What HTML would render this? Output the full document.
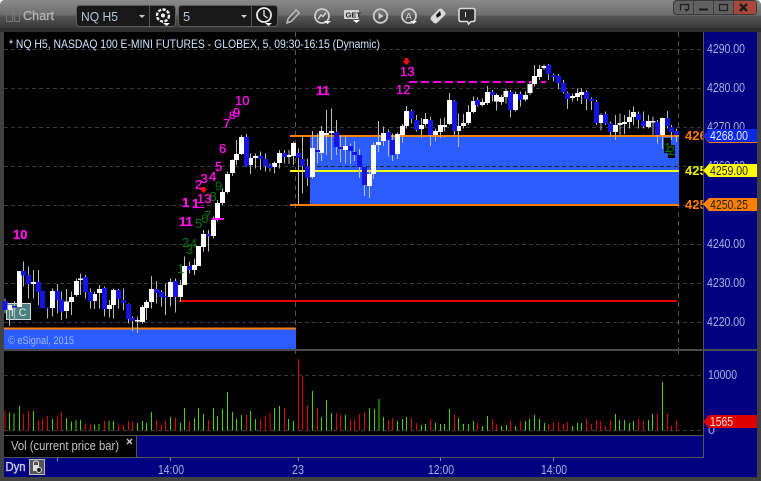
<!DOCTYPE html>
<html><head><meta charset="utf-8"><style>
html,body{margin:0;padding:0;background:#fff;width:761px;height:481px;overflow:hidden}
svg{display:block;font-family:"Liberation Sans",sans-serif}
</style></head><body>
<svg width="761" height="481" viewBox="0 0 761 481" xmlns="http://www.w3.org/2000/svg">
<defs>
<linearGradient id="tb" x1="0" y1="0" x2="0" y2="1">
<stop offset="0" stop-color="#8a8a8a"/><stop offset=".47" stop-color="#6c6c6c"/><stop offset=".5" stop-color="#565656"/><stop offset="1" stop-color="#2e2e2e"/>
</linearGradient>
<clipPath id="sv"><rect x="680" y="120" width="23" height="100"/></clipPath>
</defs>
<path d="M6 0H755Q761 0 761 6V481H0V6Q0 0 6 0Z" fill="#414141"/>
<rect x="0" y="0" width="761" height="32" fill="url(#tb)" rx="5"/>
<rect x="0" y="28" width="761" height="4" fill="#2e2e2e"/>
<rect x="4" y="32" width="753" height="445" fill="#000"/>
<rect x="703" y="32" width="54" height="445" fill="#000080"/>
<rect x="4" y="436" width="699" height="41" fill="#000080"/>
<rect x="703" y="32" width="1" height="426" fill="#555"/>

<!-- toolbar -->
<g fill="none" stroke="#777" stroke-width="1"><rect x="6.500" y="8.500" width="6" height="13"/><rect x="14.500" y="8.500" width="5" height="13"/></g>
<text x="23" y="20" font-size="12.500" fill="#b4b4b4" stroke="#b4b4b4" stroke-width=".3" textLength="31" lengthAdjust="spacingAndGlyphs">Chart</text>
<rect x="76.500" y="5.500" width="99" height="21" rx="3" fill="#181818" stroke="#5c5c5c"/>
<path d="M149.500 6V26" stroke="#555"/>
<rect x="178.500" y="5.500" width="99" height="21" rx="3" fill="#181818" stroke="#5c5c5c"/>
<path d="M251.500 6V26" stroke="#555"/>
<text x="81" y="21" font-size="13" fill="#b5c8d8" textLength="37" lengthAdjust="spacingAndGlyphs">NQ H5</text>
<text x="183" y="21" font-size="13" fill="#b5c8d8">5</text>
<path d="M139 15h6l-3 3zM241 15h6l-3 3z" fill="#ccc"/>
<circle cx="163" cy="15.500" r="6" fill="none" stroke="#eee" stroke-width="2.400" stroke-dasharray="3.2 1.4"/><circle cx="163" cy="15.500" r="2" fill="#eee"/>
<path d="M163 23h7l-3.500 3z" fill="#fff"/>
<circle cx="264" cy="15" r="7" fill="none" stroke="#e8e8e8" stroke-width="1.800"/><path d="M264 10v5.500l3.500 2.500" fill="none" stroke="#e8e8e8" stroke-width="1.300"/>
<path d="M265 23h7l-3.500 3z" fill="#fff"/>
<path d="M287 23l1.200-4.500 8-8.500 3 3-8 8.500z" fill="none" stroke="#bbb" stroke-width="1.500"/>
<circle cx="322" cy="16" r="7" fill="none" stroke="#ccc" stroke-width="1.800"/><path d="M318 19l3-4 2 1.500 3-4" fill="none" stroke="#ccc" stroke-width="1.500"/>
<path d="M324 21h7l-3.500 3z" fill="#fff"/>
<rect x="344" y="10" width="15" height="9" rx="1" fill="#d6d6d6"/><text x="345.500" y="17.500" font-size="7.500" font-weight="bold" fill="#222">GET</text>
<path d="M353 20h7l-3.500 3z" fill="#fff"/>
<circle cx="380.500" cy="16" r="6.800" fill="none" stroke="#ccc" stroke-width="1.800"/><path d="M378.500 12.500l5 3.500-5 3.500z" fill="#ccc"/>
<circle cx="409" cy="16" r="7" fill="none" stroke="#ccc" stroke-width="1.800"/><text x="405.500" y="19.500" font-size="9.500" fill="#ddd">A</text>
<path d="M410 21h7l-3.500 3z" fill="#fff"/>
<path d="M431 17l8-8q2-1 3 0l3 3q1 1 0 3l-8 8q-2 1-3 0l-3-3q-1-1 0-3z" fill="#d8d8d8"/><path d="M436 15l4-4 1 4-4 3z" fill="#111"/>
<path d="M461 8.500h12q2 0 2 2v9q0 2-2 2h-2l-2.500 2.500-1-2.500h-6.500q-2 0-2-2v-9q0-2 2-2z" fill="#2c2c2c" stroke="#d8d8d8" stroke-width="1.600"/><path d="M465.500 12v5" stroke="#ddd" stroke-width="1"/>

<!-- window buttons -->
<rect x="673.500" y=".5" width="83" height="14" rx="3" fill="#616161" stroke="#3a3a3a"/>
<path d="M693.500 1V14M713.500 1V14M733.500 1V14" stroke="#3f3f3f"/>
<path d="M734 1h20q2 0 2 2v9q0 2-2 2h-20z" fill="#a9483a"/>
<path d="M680.500 10.500V4.500h8v5" fill="none" stroke="#1c1c1c" stroke-width="1.200"/><path d="M684 9h5.500l-2.750 2.500z" fill="#1c1c1c"/>
<rect x="699" y="8.500" width="9" height="2" fill="#1c1c1c"/>
<rect x="719.500" y="4.500" width="8" height="6" fill="none" stroke="#222" stroke-width="1.200"/>
<path d="M740 4l7 7M747 4l-7 7" stroke="#1c1c1c" stroke-width="2.400"/>

<!-- grid -->
<g stroke="#3a3a3a" stroke-dasharray="4 3" fill="none">
<path d="M4 49.500H703M4 88.500H703M4 127.500H703M4 166.500H703M4 205.500H703M4 244.500H703M4 283.500H703M4 322.500H703M4 375.500H703M4 430.500H703"/>
</g>
<g stroke="#555" stroke-dasharray="5 4" fill="none"><path d="M295.500 32V349M678.500 32V349"/></g>
<path d="M295.500 351V354M678.500 351V354" stroke="#555"/>

<!-- zones -->
<rect x="4" y="329" width="292" height="20" fill="#2a5cff"/>
<rect x="4" y="327.500" width="292" height="2" fill="#ff8000"/>
<rect x="310" y="136" width="369" height="69" fill="#2a5cff"/>
<path d="M310 166.500H679" stroke="#222" stroke-dasharray="4 3"/>
<rect x="290" y="135" width="389" height="2" fill="#ff8000"/>
<rect x="290" y="204" width="389" height="2" fill="#ff8000"/>
<rect x="290" y="170" width="389" height="2" fill="#ffff00"/>
<rect x="179" y="300" width="498" height="2" fill="#e60000"/>
<path d="M409 82H546" stroke="#ff00e0" stroke-width="2" stroke-dasharray="8 4"/>

<rect x="6.500" y="303.500" width="24" height="16" fill="#4c8080" stroke="#cfdcdc"/>
<text x="9" y="316" font-size="11" fill="#e8f0f0">T C</text>
<text x="8" y="344" font-size="11" fill="#9fb8ff" textLength="66" lengthAdjust="spacingAndGlyphs">© eSignal, 2015</text>
<text x="9" y="48" font-size="12" fill="#cfe4ff" textLength="371" lengthAdjust="spacingAndGlyphs">* NQ H5, NASDAQ 100 E-MINI FUTURES - GLOBEX, 5, 09:30-16:15 (Dynamic)</text>

<!-- candles -->
<g shape-rendering="crispEdges" fill="none">
<g transform="translate(0,220) scale(.33333)">
<path stroke="#bbb" stroke-width="3" d="M15 235V280M28 250V318M43 245V300M58 153V261M70 124V200M85 140V235M100 150V235M115 150V255M127 213V264M142 262V295M157 205V290M172 192V280M184 215V300M199 207V295M214 215V285M229 175V230M241 160V225M256 165V235M271 205V265M284 215V267M298 195V265M313 200V290M328 240V293M341 205V295M356 207V265M370 205V270M385 250V310M397 290V333M412 290V339M427 255V310M440 240V300M454 168V265M469 183V250M484 210V260M497 190V285M511 175V260M526 175V278M541 180V245M553 110V195M568 125V160M583 115V165M595 78V138M610 30V95M625 30V95"/>
<path stroke="#fff" stroke-width="15" d="M28 255V270M58 153V261M100 186V192M157 213V264M199 244V273M214 231V246M229 183V225M241 175V180M284 222V243M298 207V219M328 255V267M341 210V255M412 300V305M427 261V306M440 246V264M454 207V246M511 186V231M541 195V231M553 138V195M583 135V150M595 78V138M610 42V81M640 0V48"/>
<path stroke="#1414e6" stroke-width="15" d="M15 243V270M43 258V263M70 153V167M85 165V192M115 186V216M127 213V264M142 262V266M172 213V240M184 238V275M256 171V216M271 216V243M313 204V267M356 210V237M370 240V249M385 252V297M397 294V303M469 207V219M484 216V231M497 228V233M526 183V231M568 138V150M625 42V48"/>
</g>
<g transform="translate(130,90) scale(.33333)">
<path stroke="#bbb" stroke-width="3" d="M250 380V445M263 330V395M278 296V345M292 245V310M307 208V258M320 150V225M335 135V195M349 132V230M362 190V252M376 190V235M391 185V240M406 190V245M420 220V245M434 215V250M449 180V235M463 180V220M477 180V222"/>
<path stroke="#fff" stroke-width="15" d="M250 390V437M263 339V390M278 306V339M292 252V306M307 210V249M320 192V210M335 141V192M362 204V225M376 198V204M434 219V231M449 189V219M477 195V201"/>
<path stroke="#1414e6" stroke-width="15" d="M349 141V228M391 198V207M406 207V228M420 225V234M463 189V201"/>
</g>
<g transform="translate(290,60) scale(.33333)">
<path stroke="#bbb" stroke-width="3" d="M10 245V315M25 265V435M37 228V400M52 295V378M67 213V355M82 220V310M94 198V303M109 150V285M124 145V300M139 180V285M152 230V306M166 228V310M181 250V312M193 243V303M208 267V354M223 321V408M238 330V414M250 248V357M265 183V276M280 200V258M295 208V290M307 220V303M322 218V297M337 192V249M349 138V205M364 148V190M379 165V215M394 174V234M406 159V200M421 170V258M436 205V243M451 175V234M463 172V215M478 99V195M493 120V225M505 160V261M520 162V205M535 135V195M550 110V160M562 112V140M577 115V140M592 78V135"/>
<path stroke="#fff" stroke-width="15" d="M10 249V288M67 264V351M94 213V279M109 219V225M124 213V219M166 258V270M238 342V378M250 255V342M265 246V255M280 219V243M322 222V282M337 198V225M349 153V198M394 195V207M406 177V192M436 213V225M451 195V216M463 195V201M478 120V192M505 198V213M520 189V198M535 156V189M550 123V156M577 126V135M592 96V129"/>
<path stroke="#1414e6" stroke-width="15" d="M25 279V294M37 297V318M52 318V354M82 270V276M139 216V261M152 261V267M181 258V273M193 276V285M208 285V321M223 321V375M295 216V240M307 240V285M364 153V177M379 180V210M421 180V225M493 123V213M562 120V135"/>
</g>
<g transform="translate(490,60) scale(.33333)">
<path stroke="#bbb" stroke-width="3" d="M7 90V125M20 100V152M34 105V135M48 85V130M62 90V172M77 95V155M92 95V140M106 95V125M120 65V105M134 15V80M148 15V60M162 13V30M176 12V60M190 40V65M205 42V87M220 60V100M233 95V147M248 100V125M262 85V123M275 85V132M290 90V150M304 112V150M319 120V195M333 160V212M347 155V195M361 185V230M376 165V240M390 160V225M404 165V222M418 150V205M431 140V195M446 155V205M460 155V205M475 165V205M489 170V225M503 180V250M517 172V267M532 153V205M545 195V240M559 205V246"/>
<path stroke="#fff" stroke-width="15" d="M20 105V125M34 111V126M48 93V111M77 102V150M106 105V118M120 72V99M134 48V72M148 27V51M162 18V24M248 108V114M262 99V111M275 96V105M333 165V189M376 195V216M390 189V195M404 186V192M418 171V186M431 156V171M475 183V201M489 183V187M517 174V225"/>
<path stroke="#1414e6" stroke-width="15" d="M7 96V105M62 96V150M92 102V120M176 15V42M190 45V51M205 48V69M220 69V96M233 99V117M290 96V117M304 117V123M319 126V189M347 162V190M361 190V216M446 162V180M460 183V198M503 186V225M532 174V198M545 201V216M559 213V225"/>
</g>
</g>

<!-- dark boxes with labels -->
<rect x="664" y="138" width="7" height="15" fill="#000"/><rect x="668" y="145" width="7" height="13" fill="#000"/>
<g font-size="13" fill="#0a780a">
<text x="664" y="152">1</text><text x="668" y="155">2</text>
<text x="177" y="273">1</text><text x="182" y="247">2</text><text x="190" y="248">4</text><text x="186" y="254">3</text>
<text x="195" y="228">5</text><text x="201" y="223">6</text><text x="204" y="220">7</text><text x="209.500" y="201">8</text><text x="215" y="190.500">9</text>
</g>
<g font-size="13" fill="#ff10e8" stroke="#ff10e8" stroke-width=".35">
<text x="13" y="239" font-weight="bold">10</text><text x="316" y="95" font-weight="bold">11</text>
<text x="400" y="76">13</text><text x="396" y="94">12</text>
<text x="235" y="105">10</text><text x="233" y="117">9</text><text x="229" y="119" font-size="11">8</text><text x="223" y="128">7</text><text x="219" y="153">6</text><text x="215" y="171">5</text><text x="209" y="181">4</text><text x="200.500" y="183">3</text><text x="195" y="189">2</text>
<text x="197" y="203">13</text><text x="182" y="207" font-weight="bold">1</text><text x="192" y="208" font-weight="bold">1</text><text x="179" y="226" font-weight="bold">11</text>
</g>
<rect x="198" y="207" width="6" height="1" fill="#ff10e8"/>
<rect x="212" y="218" width="12" height="2" fill="#ff10e8"/>
<path d="M404.500 58h4v3h2l-4 4-4-4h2zM201.500 187h4v2h2l-4 4-4-4h2z" fill="#f01010"/>

<!-- axis -->
<g font-size="12.500" fill="#a8b2de" lengthAdjust="spacingAndGlyphs">
<text x="707" y="53" textLength="38" lengthAdjust="spacingAndGlyphs">4290.00</text><text x="707" y="92" textLength="38" lengthAdjust="spacingAndGlyphs">4280.00</text><text x="707" y="131" textLength="38" lengthAdjust="spacingAndGlyphs">4270.00</text><text x="707" y="170" textLength="38" lengthAdjust="spacingAndGlyphs">4260.00</text>
<text x="707" y="248" textLength="38" lengthAdjust="spacingAndGlyphs">4240.00</text><text x="707" y="287" textLength="38" lengthAdjust="spacingAndGlyphs">4230.00</text><text x="707" y="326" textLength="38" lengthAdjust="spacingAndGlyphs">4220.00</text>
<text x="708" y="379" textLength="29" lengthAdjust="spacingAndGlyphs">10000</text><text x="708" y="434">0</text>
</g>

<rect x="4" y="349" width="753" height="2" fill="#4a4a4a"/>

<!-- clipped side values -->
<g font-size="13" font-weight="bold" clip-path="url(#sv)">
<text x="685" y="140" fill="#ff7a00">4268</text>
<text x="685" y="175" fill="#e8f000">4259</text>
<text x="685" y="209" fill="#ff7a00">4250</text>
</g>

<!-- tags -->
<path d="M703 136l6-7h48v13h-48z" fill="#0a28e6"/><path d="M703 136l6 6h48v1h-48z" fill="#ff8000"/>
<path d="M703 170.500l6-6.500h48v13h-48z" fill="#ffff00"/>
<path d="M703 204l6-6h48v13h-48z" fill="#ff8000"/>
<path d="M703 421.500l6-6.500h48v13h-48z" fill="#dc0000"/>
<g font-size="12.500">
<text x="710" y="140" fill="#e8ecff" textLength="38" lengthAdjust="spacingAndGlyphs">4268.00</text>
<text x="710" y="175" fill="#222" textLength="38" lengthAdjust="spacingAndGlyphs">4259.00</text>
<text x="710" y="209" fill="#222" textLength="38" lengthAdjust="spacingAndGlyphs">4250.25</text>
<text x="710" y="426" fill="#ffe0e0" textLength="23" lengthAdjust="spacingAndGlyphs">1565</text>
</g>

<!-- volume -->
<g shape-rendering="crispEdges" fill="none" stroke-width="3">
<g transform="translate(0,345) scale(.33333)">
<path stroke="#e00000" d="M15 198V256M71 207V256M85 198V256M115 225V256M127 219V256M142 213V256M172 216V256M184 201V256M256 235V256M271 238V256M313 228V256M355 238V256M370 240V256M385 228V256M397 231V256M470 225V256M484 240V256M496 228V256M526 219V256M568 228V256M626 225V256M739 210V256M781 222V256M796 213V256M810 204V256M853 189V256M895 42V256M907 93V256M922 183V256M952 189V256M1009 204V256M1021 210V256M1051 222V256M1063 222V256M1078 207V256M1093 201V256"/>
<path stroke="#44d400" d="M28 202V256M42 205V256M58 183V256M100 198V256M157 222V256M199 219V256M214 229V256M228 225V256M241 225V256M284 238V256M297 237V256M327 228V256M340 228V256M412 234V256M427 228V256M439 234V256M454 201V256M511 216V256M541 234V256M553 189V256M583 219V256M595 189V256M610 207V256M640 189V256M652 213V256M668 192V256M682 141V256M697 201V256M710 222V256M724 210V256M751 198V256M766 222V256M823 189V256M838 183V256M865 222V256M880 228V256M937 138V256M964 216V256M979 165V256M994 204V256M1036 210V256M1108 189V256M1123 192V256M1137 162V256"/>
</g>
<g transform="translate(380,345) scale(.33333)">
<path stroke="#e00000" d="M25 225V256M37 219V256M94 219V256M109 234V256M151 222V256M223 210V256M292 234V256M337 222V256M349 237V256M391 228V256M421 228V256M505 237V256M520 234V256M535 231V256M550 237V256M562 231V256M619 219V256M634 237V256M649 225V256M661 228V256M676 243V256M691 225V256M775 222V256M790 228V256M832 207V256M862 207V256M874 243V256M889 228V256"/>
<path stroke="#44d400" d="M11 216V256M52 228V256M67 222V256M79 216V256M124 240V256M136 237V256M166 234V256M181 237V256M193 237V256M208 192V256M236 219V256M250 237V256M265 237V256M280 228V256M307 243V256M322 213V256M364 243V256M379 240V256M406 243V256M436 228V256M448 222V256M463 210V256M478 222V256M493 234V256M577 243V256M592 234V256M604 234V256M706 207V256M718 225V256M733 225V256M748 234V256M760 228V256M805 225V256M817 207V256M847 111V256"/>
</g>
</g>

<!-- vol tab -->
<rect x="4" y="435" width="699" height="1" fill="#555"/>
<rect x="4" y="436" width="132" height="22" fill="#000"/>
<rect x="136" y="435" width="1" height="23" fill="#555"/>
<rect x="4" y="457" width="700" height="1" fill="#555"/>
<text x="11" y="450" font-size="12.500" fill="#c4c4c4" textLength="108" lengthAdjust="spacingAndGlyphs">Vol (current price bar)</text>
<path d="M127 439l5 5M132 439l-5 5" stroke="#ccc" stroke-width="1.400"/>

<!-- time axis -->
<path d="M57.500 458v3M170.500 458v3M298.500 458v3M440.500 458v3M553.500 458v3" stroke="#888"/>
<g font-size="12.500" fill="#aab0d8">
<text x="158" y="474" textLength="26" lengthAdjust="spacingAndGlyphs">14:00</text><text x="292" y="474" textLength="12" lengthAdjust="spacingAndGlyphs">23</text><text x="428" y="474" textLength="26" lengthAdjust="spacingAndGlyphs">12:00</text><text x="541" y="474" textLength="26" lengthAdjust="spacingAndGlyphs">14:00</text>
</g>
<text x="5.500" y="471" font-size="12.500" fill="#d0d0f0" stroke="#d0d0f0" stroke-width=".35" textLength="20" lengthAdjust="spacingAndGlyphs">Dyn</text>
<rect x="29.500" y="459.500" width="15" height="15" fill="#555" stroke="#bbb"/>
<path d="M33.500 465v-2q0-2 2.500-2t2.500 2v2" fill="none" stroke="#ddd"/><rect x="33" y="465" width="6" height="6" fill="#ddd"/><circle cx="39" cy="470" r="2.500" fill="#222" stroke="#ddd"/>
</svg>
</body></html>
